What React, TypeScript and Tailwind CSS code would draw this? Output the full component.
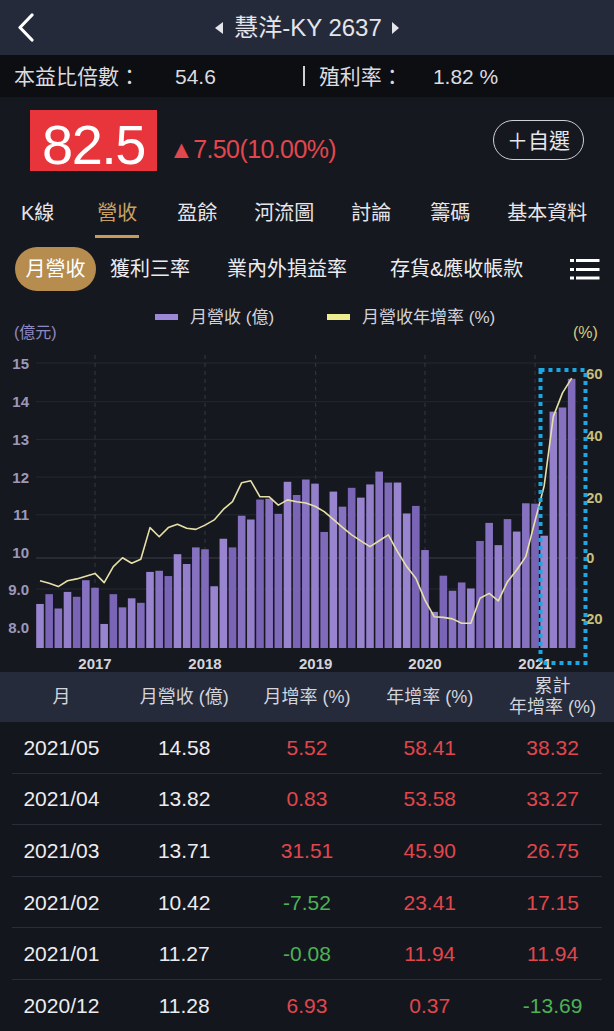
import React from "react";

const FONT = "'Liberation Sans','Noto Sans CJK TC',sans-serif";

const revenue = [
  8.61, 8.87, 8.49, 8.93, 8.8, 9.24, 9.04, 8.08, 8.87, 8.52,
  8.76, 8.64, 9.46, 9.49, 9.35, 9.93, 9.67, 10.11, 10.06, 9.08,
  10.34, 10.11, 10.95, 10.85, 11.38, 11.4, 11.0, 11.85, 11.5, 11.91,
  11.8, 10.52, 11.59, 11.19, 11.69, 11.43, 11.78, 12.12, 11.83, 11.83,
  11.01, 11.21, 10.04, 8.4, 9.36, 8.96, 9.18, 9.02, 10.28, 10.76,
  10.17, 10.86, 10.53, 11.28, 11.27, 10.42, 13.71, 13.82, 14.58,
];

const yoy = [
  -7.5, -8.3, -9.4, -7.5, -6.9, -6.0, -5.1, -8.1, -2.9, 0,
  -1.8, -0.5, 9.8, 6.8, 9.8, 10.9, 9.6, 9.2, 10.6, 12.3,
  15.7, 18.2, 24.4, 25.0, 19.8, 19.8, 17.1, 18.8, 18.2, 17.8,
  16.7, 15.0, 12.5, 9.9, 7.4, 5.5, 3.6, 5.5, 7.4, 2.0,
  -2.9, -6.7, -13.8, -19.2, -19.4, -19.9, -21.3, -21.3, -13.2, -11.6,
  -14.0, -7.8, -4.0, 0.37, 11.94, 23.41, 45.9, 53.58, 58.41,
];

const shades = ["#9984cf", "#8672c1", "#7a64b5", "#937fca", "#806bbb"];
const shadeIdx = [0, 2, 1, 3, 2, 1, 4, 0, 2, 1, 3, 4, 0, 1, 2, 0, 3, 1, 4, 0];

const OY = 298;
const X = (i: number) => 40 + i * 9.1667;
const YL = (v: number) => 363 + (15 - v) * 37.71 - OY;
const YR = (p: number) => 557.7 - p * 3.075 - OY;
const BASE = 648 - OY;

function Chart() {
  const linePts = yoy.map((p, i) => `${X(i).toFixed(1)},${YR(p).toFixed(1)}`).join(" ");
  const grid = [363, 401.7, 439.4, 477.1, 514.8, 589];
  const leftLabels: [string, number][] = [
    ["15", 363],
    ["14", 401.7],
    ["13", 439.4],
    ["12", 477.1],
    ["11", 514.8],
    ["10", 552],
    ["9.0", 589.5],
    ["8.0", 627],
  ];
  const rightLabels: [string, number][] = [
    ["60", 373],
    ["40", 435],
    ["20", 497],
    ["0", 557.7],
    ["-20", 618.7],
  ];
  const years: [string, number][] = [
    ["2017", 95],
    ["2018", 205],
    ["2019", 315.7],
    ["2020", 425],
    ["2021", 535],
  ];
  return (
    <svg width={614} height={374} className="block" style={{ fontFamily: FONT }}>
      {/* legend */}
      <rect x={155} y={314 - OY} width={23} height={6} fill="#9d88d8" />
      <text x={190} y={317 - OY} dominantBaseline="central" fontSize={17} fill="#d2d2da">
        月營收 (億)
      </text>
      <rect x={327} y={314 - OY} width={23} height={6} fill="#efeb90" />
      <text x={362} y={317 - OY} dominantBaseline="central" fontSize={17} fill="#d2d2da">
        月營收年增率 (%)
      </text>
      <text x={14} y={332 - OY} dominantBaseline="central" fontSize={16} fill="#8f89c2">
        (億元)
      </text>
      <text x={573} y={332 - OY} dominantBaseline="central" fontSize={16} fill="#d4cc7e">
        (%)
      </text>

      {/* horizontal grid */}
      {grid.map((g) => (
        <line key={g} x1={36} x2={578} y1={g - OY} y2={g - OY} stroke="#242833" strokeWidth={1} />
      ))}
      <line x1={36} x2={578} y1={558 - OY} y2={558 - OY} stroke="#3a3e4a" strokeWidth={1.2} />

      {/* vertical dashed */}
      {years.map(([y, x]) => (
        <line key={y} x1={x} x2={x} y1={355 - OY} y2={BASE} stroke="#363945" strokeWidth={1} strokeDasharray="4 4" />
      ))}

      {/* bars */}
      {revenue.map((v, i) => (
        <rect
          key={i}
          x={X(i) - 3.8}
          y={YL(v)}
          width={7.6}
          height={BASE - YL(v)}
          fill={shades[shadeIdx[i % shadeIdx.length]]}
        />
      ))}

      {/* yoy line */}
      <polyline points={linePts} fill="none" stroke="#e6e0a8" strokeWidth={1.6} strokeLinejoin="round" />

      {/* left labels */}
      {leftLabels.map(([t, y]) => (
        <text key={t} x={29} y={y - OY} textAnchor="end" dominantBaseline="central" fontSize={15} fontWeight={600} fill="#9d98ba">
          {t}
        </text>
      ))}
      {/* right labels */}
      {rightLabels.map(([t, y]) => (
        <text
          key={t}
          x={t.startsWith("-") ? 581 : 586}
          y={y - OY}
          dominantBaseline="central"
          fontSize={15}
          fontWeight={600}
          fill="#c7bf7c"
        >
          {t}
        </text>
      ))}
      {/* year labels */}
      {years.map(([y, x]) => (
        <text key={y} x={x} y={663 - OY} textAnchor="middle" dominantBaseline="central" fontSize={15} fontWeight={600} fill="#d4d5dc">
          {y}
        </text>
      ))}

      {/* highlight box */}
      <rect
        x={540.5}
        y={370 - OY}
        width={45}
        height={293}
        fill="none"
        stroke="#1ba6e4"
        strokeWidth={4}
        strokeDasharray="4 4"
      />
    </svg>
  );
}

const rows = [
  ["2021/05", "14.58", "5.52", "58.41", "38.32"],
  ["2021/04", "13.82", "0.83", "53.58", "33.27"],
  ["2021/03", "13.71", "31.51", "45.90", "26.75"],
  ["2021/02", "10.42", "-7.52", "23.41", "17.15"],
  ["2021/01", "11.27", "-0.08", "11.94", "11.94"],
  ["2020/12", "11.28", "6.93", "0.37", "-13.69"],
];

function Hamburger() {
  return (
    <svg width={30} height={21} viewBox="0 0 30 21">
      {[1.5, 10.5, 19].map((y) => (
        <g key={y}>
          <rect x={0} y={y - 1.5} width={4} height={3} fill="#ffffff" />
          <rect x={6} y={y - 1.5} width={23.5} height={3} fill="#ffffff" />
        </g>
      ))}
    </svg>
  );
}

export default function App() {
  const tabs: [string, string][] = [
    ["K線", "ml-[21px]"],
    ["營收", "ml-[41px]"],
    ["盈餘", "ml-[38px]"],
    ["河流圖", "ml-[37px]"],
    ["討論", "ml-[37px]"],
    ["籌碼", "ml-[39px]"],
    ["基本資料", "ml-[37px]"],
  ];
  return (
    <div className="w-[614px] h-[1031px] overflow-hidden bg-[#16181f] font-['Liberation_Sans','Noto_Sans_CJK_TC',sans-serif]">
      {/* header */}
      <div className="h-[55px] bg-[#252a3a] grid grid-cols-[1fr_auto_1fr] items-center">
        <div className="pl-[17px] flex items-center">
          <svg width={18} height={30} viewBox="0 0 18 30">
            <path d="M15 2 L3 14.5 L15 27" fill="none" stroke="#ffffff" strokeWidth={3.2} strokeLinecap="round" strokeLinejoin="round" />
          </svg>
        </div>
        <div className="flex items-center text-[#e4e5ea]">
          <svg width={9} height={12} viewBox="0 0 9 12">
            <path d="M8 0 L0 6 L8 12 Z" fill="#e4e5ea" />
          </svg>
          <span className="ml-[10px] text-[24px] leading-none">慧洋-KY 2637</span>
          <svg width={7} height={12} viewBox="0 0 7 12" className="ml-[10px]">
            <path d="M0 0 L7 6 L0 12 Z" fill="#e4e5ea" />
          </svg>
        </div>
        <div />
      </div>

      {/* info row */}
      <div className="h-[42px] bg-[#0d0e12] flex items-center text-[21px] text-[#dcdce0] leading-none">
        <span className="ml-[14px]">本益比倍數：</span>
        <span className="ml-[35px]">54.6</span>
        <span className="ml-[87px] w-[2px] h-[20px] bg-[#cfcfd4]" />
        <span className="ml-[14px]">殖利率：</span>
        <span className="ml-[30px]">1.82 %</span>
      </div>

      {/* price row */}
      <div className="h-[93px] flex items-start">
        <div className="ml-[30px] mt-[13px] w-[127px] h-[61px] bg-[#e8353b] flex justify-center items-start pt-[7px]">
          <span className="text-[56px] leading-none text-white tracking-[-1.5px]">82.5</span>
        </div>
        <span className="ml-[12px] mt-[40px] text-[25px] leading-none text-[#e1474d] tracking-[-0.6px]">▲7.50(10.00%)</span>
        <div className="ml-auto mr-[30px] mt-[23px] w-[91px] h-[40px] rounded-full border-[1.5px] border-[#cfd0d5] flex items-center justify-center text-[21px] text-[#e8e8ec] leading-none">
          ＋自選
        </div>
      </div>

      {/* tabs */}
      <div className="h-[50px] flex items-start">
        {tabs.map(([t, ml], i) => (
          <div key={t} className={`${ml} flex flex-col items-center`}>
            <span className={`pt-[13px] text-[20px] leading-[20px] ${i === 1 ? "text-[#c9a064]" : "text-[#e6e6ea]"}`}>{t}</span>
            {i === 1 && <span className="mt-[12px] w-[44px] h-[3px] bg-[#c79c5a]" />}
          </div>
        ))}
      </div>

      {/* sub tabs */}
      <div className="h-[58px] flex items-center text-[20px] text-[#ececf0] leading-none">
        <div className="ml-[15px] w-[81px] h-[44px] rounded-full bg-[#b78c4f] flex items-center justify-center text-white">月營收</div>
        <span className="ml-[14px]">獲利三率</span>
        <span className="ml-[37px]">業內外損益率</span>
        <span className="ml-[43px]">存貨&amp;應收帳款</span>
        <div className="ml-auto mr-[14px] flex items-center">
          <Hamburger />
        </div>
      </div>

      {/* chart */}
      <Chart />

      {/* table header */}
      <div className="h-[50px] bg-[#262b3c] grid grid-cols-5 items-center text-center text-[18px] text-[#d3d5db] leading-[21px]">
        <div>月</div>
        <div>月營收 (億)</div>
        <div>月增率 (%)</div>
        <div>年增率 (%)</div>
        <div className="flex flex-col">
          <span>累計</span>
          <span>年增率 (%)</span>
        </div>
      </div>

      {/* rows */}
      <div className="bg-[#14161d]">
        {rows.map((r) => (
          <div key={r[0]}>
            <div className="h-[50.6px] grid grid-cols-5 items-center text-center text-[21px] leading-none">
              {r.map((c, j) => {
                const color =
                  j < 2 ? "text-[#ececf0]" : c.startsWith("-") ? "text-[#4cb256]" : "text-[#e0464c]";
                return (
                  <div key={j} className={color}>
                    {c}
                  </div>
                );
              })}
            </div>
            <div className="mx-[12px] h-px bg-[#2a2d37]" />
          </div>
        ))}
      </div>
    </div>
  );
}
